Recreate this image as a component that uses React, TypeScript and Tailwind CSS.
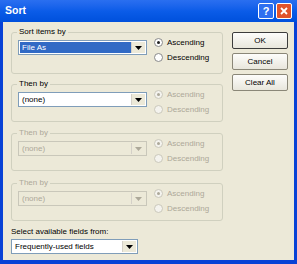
import React from 'react';

const font = { fontFamily: '"Liberation Sans", Arial, sans-serif' };

function Arrow({ disabled }: { disabled?: boolean }) {
  return (
    <div className="flex h-full w-[14px] items-center justify-center border-l border-[#d4d0c8] bg-[#ece9d8]">
      <svg width="7" height="4" viewBox="0 0 7 4">
        <path d="M0 0h7L3.5 4z" fill={disabled ? '#aca899' : '#000'} />
      </svg>
    </div>
  );
}

function Combo({ value, selected, disabled, w = 'w-[129px]' }: { value: string; selected?: boolean; disabled?: boolean; w?: string }) {
  return (
    <div className={`flex h-[15px] ${w} items-stretch border p-px ${disabled ? 'border-[#c9c7ba] bg-[#ece9d8]' : 'border-[#7f9db9] bg-white'}`}>
      <div className={`flex flex-1 items-center px-[2px] text-[8px] leading-none ${selected ? 'bg-[#316ac5] text-white' : disabled ? 'text-[#aca899]' : 'text-black'}`}>
        {value}
      </div>
      <Arrow disabled={disabled} />
    </div>
  );
}

function Radio({ label, checked, disabled }: { label: string; checked?: boolean; disabled?: boolean }) {
  return (
    <div className={`flex items-center gap-[4px] text-[8px] leading-none ${disabled ? 'text-[#aca899]' : 'text-black'}`}>
      <div className={`flex h-[9px] w-[9px] items-center justify-center rounded-full border ${disabled ? 'border-[#cac8bb] bg-[#f4f3ee]' : 'border-[#8a8a8a] bg-white'}`}>
        {checked && <div className={`h-[3px] w-[3px] rounded-full ${disabled ? 'bg-[#aca899]' : 'bg-[#222]'}`} />}
      </div>
      {label}
    </div>
  );
}

function Group({ title, value, selected, disabled, radiosOff, h }: { title: string; value: string; selected?: boolean; disabled?: boolean; radiosOff?: boolean; h: string }) {
  return (
    <fieldset className={`${h} w-[212px] rounded-[3px] border border-[#d0d0bf] px-[6px] pb-0 pt-0`}>
      <legend className={`ml-[-1px] px-[2px] text-[8px] leading-[10px] ${disabled ? 'text-[#aca899]' : 'text-black'}`}>{title}</legend>
      <div className="flex items-start">
        <div className="mt-[3px]">
          <Combo value={value} selected={selected} disabled={disabled} />
        </div>
        <div className="ml-[7px] flex flex-col gap-[6px] pt-[1px]">
          <Radio label="Ascending" checked disabled={disabled || radiosOff} />
          <Radio label="Descending" disabled={disabled || radiosOff} />
        </div>
      </div>
    </fieldset>
  );
}

function Btn({ label, def }: { label: string; def?: boolean }) {
  return (
    <div className={`flex h-[17px] w-[56px] items-center justify-center rounded-[2px] border bg-gradient-to-b from-[#fdfdfb] to-[#e8e6dc] text-[8px] text-black ${def ? 'border-[#3c3c3c]' : 'border-[#8a8778]'}`}>
      {label}
    </div>
  );
}

export default function App() {
  return (
    <div className="flex h-[264px] w-[297px] flex-col bg-[#0842d6]" style={font}>
      <div className="flex h-[22px] items-center justify-between bg-gradient-to-b from-[#2a6ff0] via-[#0b5ce8] to-[#0050dc] pl-[5px] pr-[5px]">
        <span className="text-[10.5px] font-bold text-white">Sort</span>
        <div className="flex gap-[2px]">
          <div className="flex h-[16px] w-[16px] items-center justify-center rounded-[2px] border border-white bg-[#2e6ff0] text-[11px] font-bold leading-none text-white">?</div>
          <div className="flex h-[16px] w-[16px] items-center justify-center rounded-[2px] border border-white bg-[#e0532c]">
            <svg width="8" height="8" viewBox="0 0 8 8">
              <path d="M1 1l6 6M7 1L1 7" stroke="#fff" strokeWidth="1.8" />
            </svg>
          </div>
        </div>
      </div>
      <div className="mx-[3px] mb-[4px] flex flex-1 bg-[#ece9d8] pl-[8px] pt-[5px]">
        <div className="flex flex-col">
          <Group title="Sort items by" value="File As" selected h="h-[47px]" />
          <div className="h-[5px]" />
          <Group title="Then by" value="(none)" radiosOff h="h-[43px]" />
          <div className="h-[6px]" />
          <Group title="Then by" value="(none)" disabled h="h-[43px]" />
          <div className="h-[7px]" />
          <Group title="Then by" value="(none)" disabled h="h-[43px]" />
          <div className="mt-[6px] text-[8px] leading-[10px] text-black">Select available fields from:</div>
          <div className="mt-[2px]">
            <Combo value="Frequently-used fields" w="w-[127px]" />
          </div>
        </div>
        <div className="ml-[9px] mt-[5px] flex flex-col gap-[4px]">
          <Btn label="OK" def />
          <Btn label="Cancel" />
          <Btn label="Clear All" />
        </div>
      </div>
    </div>
  );
}
